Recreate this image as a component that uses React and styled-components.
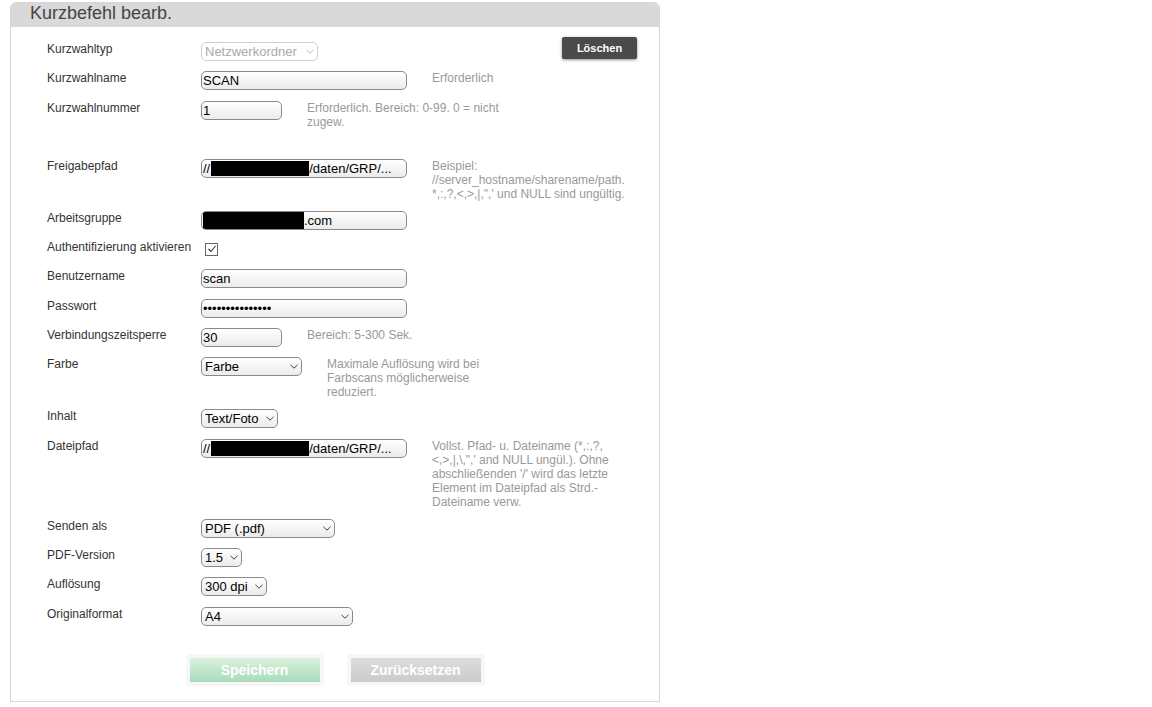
import styled, {createGlobalStyle, css} from "styled-components";

const GlobalStyle = createGlobalStyle`
    body {
        margin: 0;
        background: #fff;
        font-family: "Liberation Sans", Arial, sans-serif;
    }
`;

const Chevron = ({muted}) => (
    <ChevronIcon viewBox="0 0 8 5" $muted={muted}>
        <polyline points="0.5,0.8 4,4.2 7.5,0.8" fill="none" strokeWidth="1" />
    </ChevronIcon>
);

const Select = ({width, value, disabled}) => (
    <SelectWrap>
        <SelectBox $width={width} disabled={disabled} defaultValue={value}>
            <option>{value}</option>
        </SelectBox>
        <Chevron muted={disabled} />
    </SelectWrap>
);

const FormRow = ({label, hint, children}) => (
    <Row>
        <Label>{label}</Label>
        <Field>{children}</Field>
        {hint && <Hint>{hint}</Hint>}
    </Row>
);

export default function App() {
    return (
        <>
            <GlobalStyle />
            <Panel>
                <Header>Kurzbefehl bearb.</Header>
                <Body>
                    <Row>
                        <Label>Kurzwahltyp</Label>
                        <Field>
                            <Select width={117} value="Netzwerkordner" disabled />
                        </Field>
                        <DeleteButton>Löschen</DeleteButton>
                    </Row>
                    <FormRow label="Kurzwahlname" hint="Erforderlich">
                        <TextInput $width={206} defaultValue="SCAN" />
                    </FormRow>
                    <FormRow label="Kurzwahlnummer" hint="Erforderlich. Bereich: 0-99. 0 = nicht zugew.">
                        <TextInput $width={81} defaultValue="1" />
                    </FormRow>
                    <Spacer />
                    <FormRow
                        label="Freigabepfad"
                        hint={`Beispiel: //server_hostname/sharename/path. *,:,?,<,>,|,",' und NULL sind ungültig.`}
                    >
                        <FakeInput $width={206}>
                            //<Redact $width={98} $gap={1} />/daten/GRP/...
                        </FakeInput>
                    </FormRow>
                    <FormRow label="Arbeitsgruppe">
                        <FakeInput $width={206}>
                            <Redact $width={101} $full />.com
                        </FakeInput>
                    </FormRow>
                    <FormRow label="Authentifizierung aktivieren">
                        <CheckBox>
                            <svg viewBox="0 0 10 10" width="10" height="10">
                                <polyline points="1.5,5 4,7.5 8.5,2" fill="none" stroke="#333" strokeWidth="1.1" />
                            </svg>
                        </CheckBox>
                    </FormRow>
                    <FormRow label="Benutzername">
                        <TextInput $width={206} defaultValue="scan" />
                    </FormRow>
                    <FormRow label="Passwort">
                        <TextInput type="password" $width={206} defaultValue="xxxxxxxxxxxxxxx" />
                    </FormRow>
                    <FormRow label="Verbindungszeitsperre" hint="Bereich: 5-300 Sek.">
                        <TextInput $width={81} defaultValue="30" />
                    </FormRow>
                    <FormRow label="Farbe" hint="Maximale Auflösung wird bei Farbscans möglicherweise reduziert.">
                        <Select width={101} value="Farbe" />
                    </FormRow>
                    <FormRow label="Inhalt">
                        <Select width={77} value="Text/Foto" />
                    </FormRow>
                    <FormRow
                        label="Dateipfad"
                        hint={`Vollst. Pfad- u. Dateiname (*,:,?,<,>,|,\\,",' and NULL ungül.). Ohne abschließenden '/' wird das letzte Element im Dateipfad als Strd.-Dateiname verw.`}
                    >
                        <FakeInput $width={206}>
                            //<Redact $width={98} $gap={1} />/daten/GRP/...
                        </FakeInput>
                    </FormRow>
                    <FormRow label="Senden als">
                        <Select width={134} value="PDF (.pdf)" />
                    </FormRow>
                    <FormRow label="PDF-Version">
                        <Select width={41} value="1.5" />
                    </FormRow>
                    <FormRow label="Auflösung">
                        <Select width={66} value="300 dpi" />
                    </FormRow>
                    <FormRow label="Originalformat">
                        <Select width={152} value="A4" />
                    </FormRow>
                    <Actions>
                        <Halo><ActionButton $variant="save">Speichern</ActionButton></Halo>
                        <Halo><ActionButton $variant="reset">Zurücksetzen</ActionButton></Halo>
                    </Actions>
                </Body>
            </Panel>
        </>
    );
}

const Panel = styled.div`
    margin: 2px 0 0 10px;
    width: 648px;
    border: 1px solid #d6d6d6;
    border-radius: 6px 6px 0 0;
    overflow: hidden;
`;

const Header = styled.div`
    height: 24px;
    background: #d9d9d9;
    color: #444;
    font-size: 18px;
    line-height: 21px;
    padding-left: 19px;
`;

const Body = styled.div`
    padding: 10px 0 15px 0;
`;

const Row = styled.div`
    display: flex;
    align-items: flex-start;
    padding: 5px 0 5px 36px;
`;

const Spacer = styled.div`
    height: 20px;
`;

const Label = styled.div`
    flex: none;
    width: 154px;
    font-size: 12px;
    line-height: 14px;
    color: #333;
`;

const Field = styled.div`
    flex: none;
    display: flex;
    align-items: flex-start;
    min-height: 19.33px;
`;

const Hint = styled.div`
    flex: none;
    width: 195px;
    margin-left: 25px;
    font-size: 12px;
    line-height: 14px;
    color: #999;
`;

const inputLook = css`
    box-sizing: border-box;
    width: ${(p) => p.$width}px;
    height: 19px;
    border: 1px solid #8a8a8a;
    border-radius: 5px;
    background: linear-gradient(to bottom, #ffffff 0%, #ebebeb 100%);
    font-family: "Liberation Sans", Arial, sans-serif;
    font-size: 13px;
    color: #000;
`;

const TextInput = styled.input`
    ${inputLook};
    padding: 0 1px;
    margin: 0;
    outline: none;
`;

const FakeInput = styled.div`
    ${inputLook};
    display: flex;
    align-items: center;
    padding: 0 1px;
    overflow: hidden;
    white-space: nowrap;
`;

const Redact = styled.span`
    flex: none;
    align-self: stretch;
    width: ${(p) => p.$width}px;
    margin: ${(p) => (p.$full ? "0" : "1px")} 0 ${(p) => (p.$full ? "0" : "1px")} ${(p) => p.$gap || 0}px;
    background: #000;
`;

const SelectWrap = styled.span`
    position: relative;
    display: inline-block;
`;

const SelectBox = styled.select`
    ${inputLook};
    display: block;
    appearance: none;
    -webkit-appearance: none;
    margin: 0;
    padding: 0 12px 0 3px;
    outline: none;
    &:disabled {
        color: #aaa;
        border-color: #cfcfcf;
        background: #fff;
        opacity: 1;
    }
`;

const ChevronIcon = styled.svg`
    position: absolute;
    right: 4px;
    top: 7px;
    width: 8px;
    height: 5px;
    pointer-events: none;
    stroke: ${(p) => (p.$muted ? "#bbb" : "#444")};
`;

const CheckBox = styled.span`
    box-sizing: border-box;
    display: flex;
    align-items: center;
    justify-content: center;
    width: 13px;
    height: 13px;
    margin: 3px 0 0 4px;
    border: 1px solid #666;
    background: #fff;
`;

const DeleteButton = styled.button`
    margin: -5px 22px 0 auto;
    width: 75px;
    height: 22px;
    border: none;
    border-radius: 2px;
    background: #4a4a4a;
    color: #fff;
    font-family: "Liberation Sans", Arial, sans-serif;
    font-weight: bold;
    font-size: 11px;
    box-shadow: 0 1px 3px rgba(0, 0, 0, 0.45);
    cursor: pointer;
`;

const Actions = styled.div`
    display: flex;
    justify-content: center;
    gap: 23px;
    margin-top: 23px;
`;

const Halo = styled.div`
    padding: 4px;
    background: #f7f7f7;
    border-radius: 4px;
`;

const ActionButton = styled.button`
    display: block;
    width: 130px;
    height: 24px;
    border: none;
    color: #fff;
    font-family: "Liberation Sans", Arial, sans-serif;
    font-weight: bold;
    font-size: 14px;
    background: ${(p) =>
        p.$variant === "save"
            ? "linear-gradient(to bottom, #dcf1dc 0%, #a7dbbd 100%)"
            : "linear-gradient(to bottom, #dcdcdc 0%, #cbcbcb 100%)"};
    cursor: pointer;
`;
